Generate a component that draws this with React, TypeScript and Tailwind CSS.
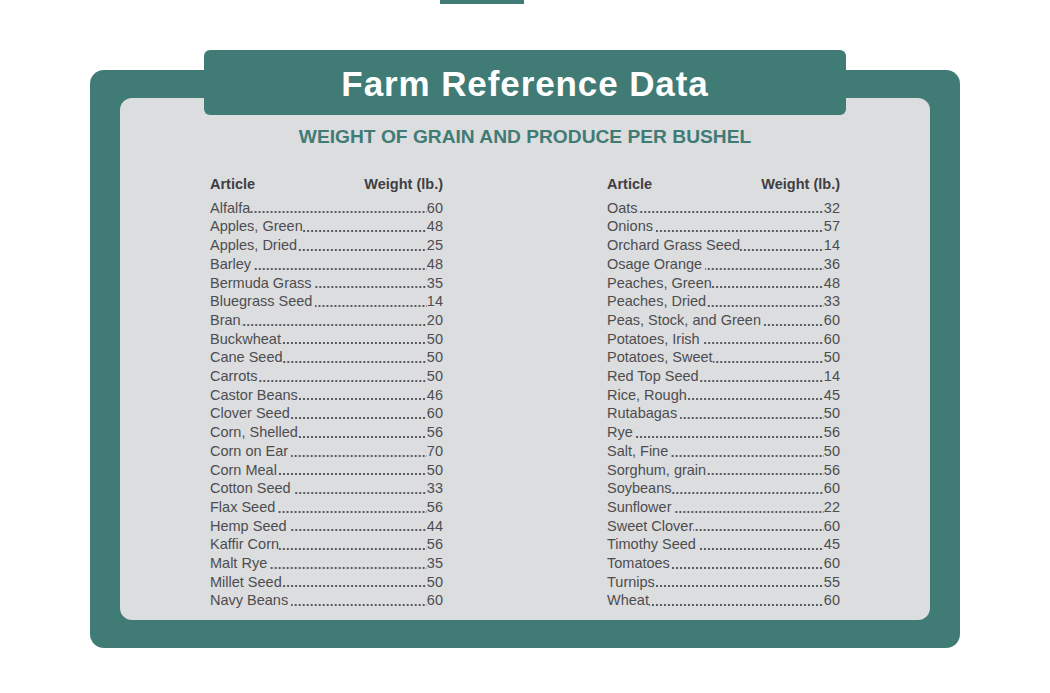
// [name, weight, space before the leader]
const left: [string, string, boolean][] = [
  ["Alfalfa", "60", false],
  ["Apples, Green", "48", false],
  ["Apples, Dried", "25", false],
  ["Barley", "48", true],
  ["Bermuda Grass", "35", true],
  ["Bluegrass Seed", "14", true],
  ["Bran", "20", false],
  ["Buckwheat", "50", false],
  ["Cane Seed", "50", false],
  ["Carrots", "50", false],
  ["Castor Beans", "46", false],
  ["Clover Seed", "60", false],
  ["Corn, Shelled", "56", false],
  ["Corn on Ear", "70", true],
  ["Corn Meal", "50", false],
  ["Cotton Seed", "33", true],
  ["Flax Seed", "56", true],
  ["Hemp Seed", "44", true],
  ["Kaffir Corn", "56", false],
  ["Malt Rye", "35", true],
  ["Millet Seed", "50", false],
  ["Navy Beans", "60", true],
];

const right: [string, string, boolean][] = [
  ["Oats", "32", false],
  ["Onions", "57", true],
  ["Orchard Grass Seed", "14", false],
  ["Osage Orange", "36", true],
  ["Peaches, Green", "48", false],
  ["Peaches, Dried", "33", false],
  ["Peas, Stock, and Green", "60", true],
  ["Potatoes, Irish", "60", true],
  ["Potatoes, Sweet", "50", false],
  ["Red Top Seed", "14", false],
  ["Rice, Rough", "45", false],
  ["Rutabagas", "50", true],
  ["Rye", "56", true],
  ["Salt, Fine", "50", true],
  ["Sorghum, grain", "56", false],
  ["Soybeans", "60", false],
  ["Sunflower", "22", true],
  ["Sweet Clover", "60", false],
  ["Timothy Seed", "45", true],
  ["Tomatoes", "60", false],
  ["Turnips", "55", false],
  ["Wheat", "60", false],
];

function Column({ rows }: { rows: [string, string, boolean][] }) {
  return (
    <div className="w-[233px]">
      <div className="flex justify-between font-bold text-[#404042] leading-[18.7px]">
        <span>Article</span>
        <span>Weight (lb.)</span>
      </div>
      <div className="mt-[5px]">
        {rows.map(([name, weight, spaced]) => (
          <div key={name} className="flex leading-[18.7px] whitespace-nowrap">
            <span>{name}</span>
            <span
              className={
                "flex-1 self-end h-[2px] mb-[4px] bg-repeat-x bg-right bg-[length:4px_2px] bg-[linear-gradient(to_right,#5a5a5c_2px,transparent_2px)] " +
                (spaced ? "ml-[3px]" : "ml-0")
              }
            />
            <span>{weight}</span>
          </div>
        ))}
      </div>
    </div>
  );
}

export default function App() {
  return (
    <div
      className="w-full h-[693px] bg-white text-[14.5px] text-[#4d4d4f]"
      style={{ fontFamily: '"Liberation Sans", Arial, sans-serif' }}
    >
      <div className="ml-[440px] w-[84px] h-[4px] bg-[#407b76]" />

      <div className="ml-[90px] w-[870px] mt-[46px]">
        <div className="relative z-10 mx-[114px] h-[65px] bg-[#407b76] rounded-[6px] flex items-center justify-center">
          <h1 className="text-white font-bold text-[35px] tracking-[0.9px] leading-none mt-[1px]">
            Farm Reference Data
          </h1>
        </div>

        <div className="-mt-[45px] bg-[#407b76] rounded-[14px] px-[30px] pt-[28px] pb-[28px]">
          <div className="bg-[#dcdddf] rounded-[12px] h-[522px] pt-[27px]">
            <h2 className="text-center text-[#407b76] font-bold text-[19.2px] leading-[24px]">
              WEIGHT OF GRAIN AND PRODUCE PER BUSHEL
            </h2>
            <div className="flex justify-center gap-[164px] mt-[26px]">
              <Column rows={left} />
              <Column rows={right} />
            </div>
          </div>
        </div>
      </div>
    </div>
  );
}
